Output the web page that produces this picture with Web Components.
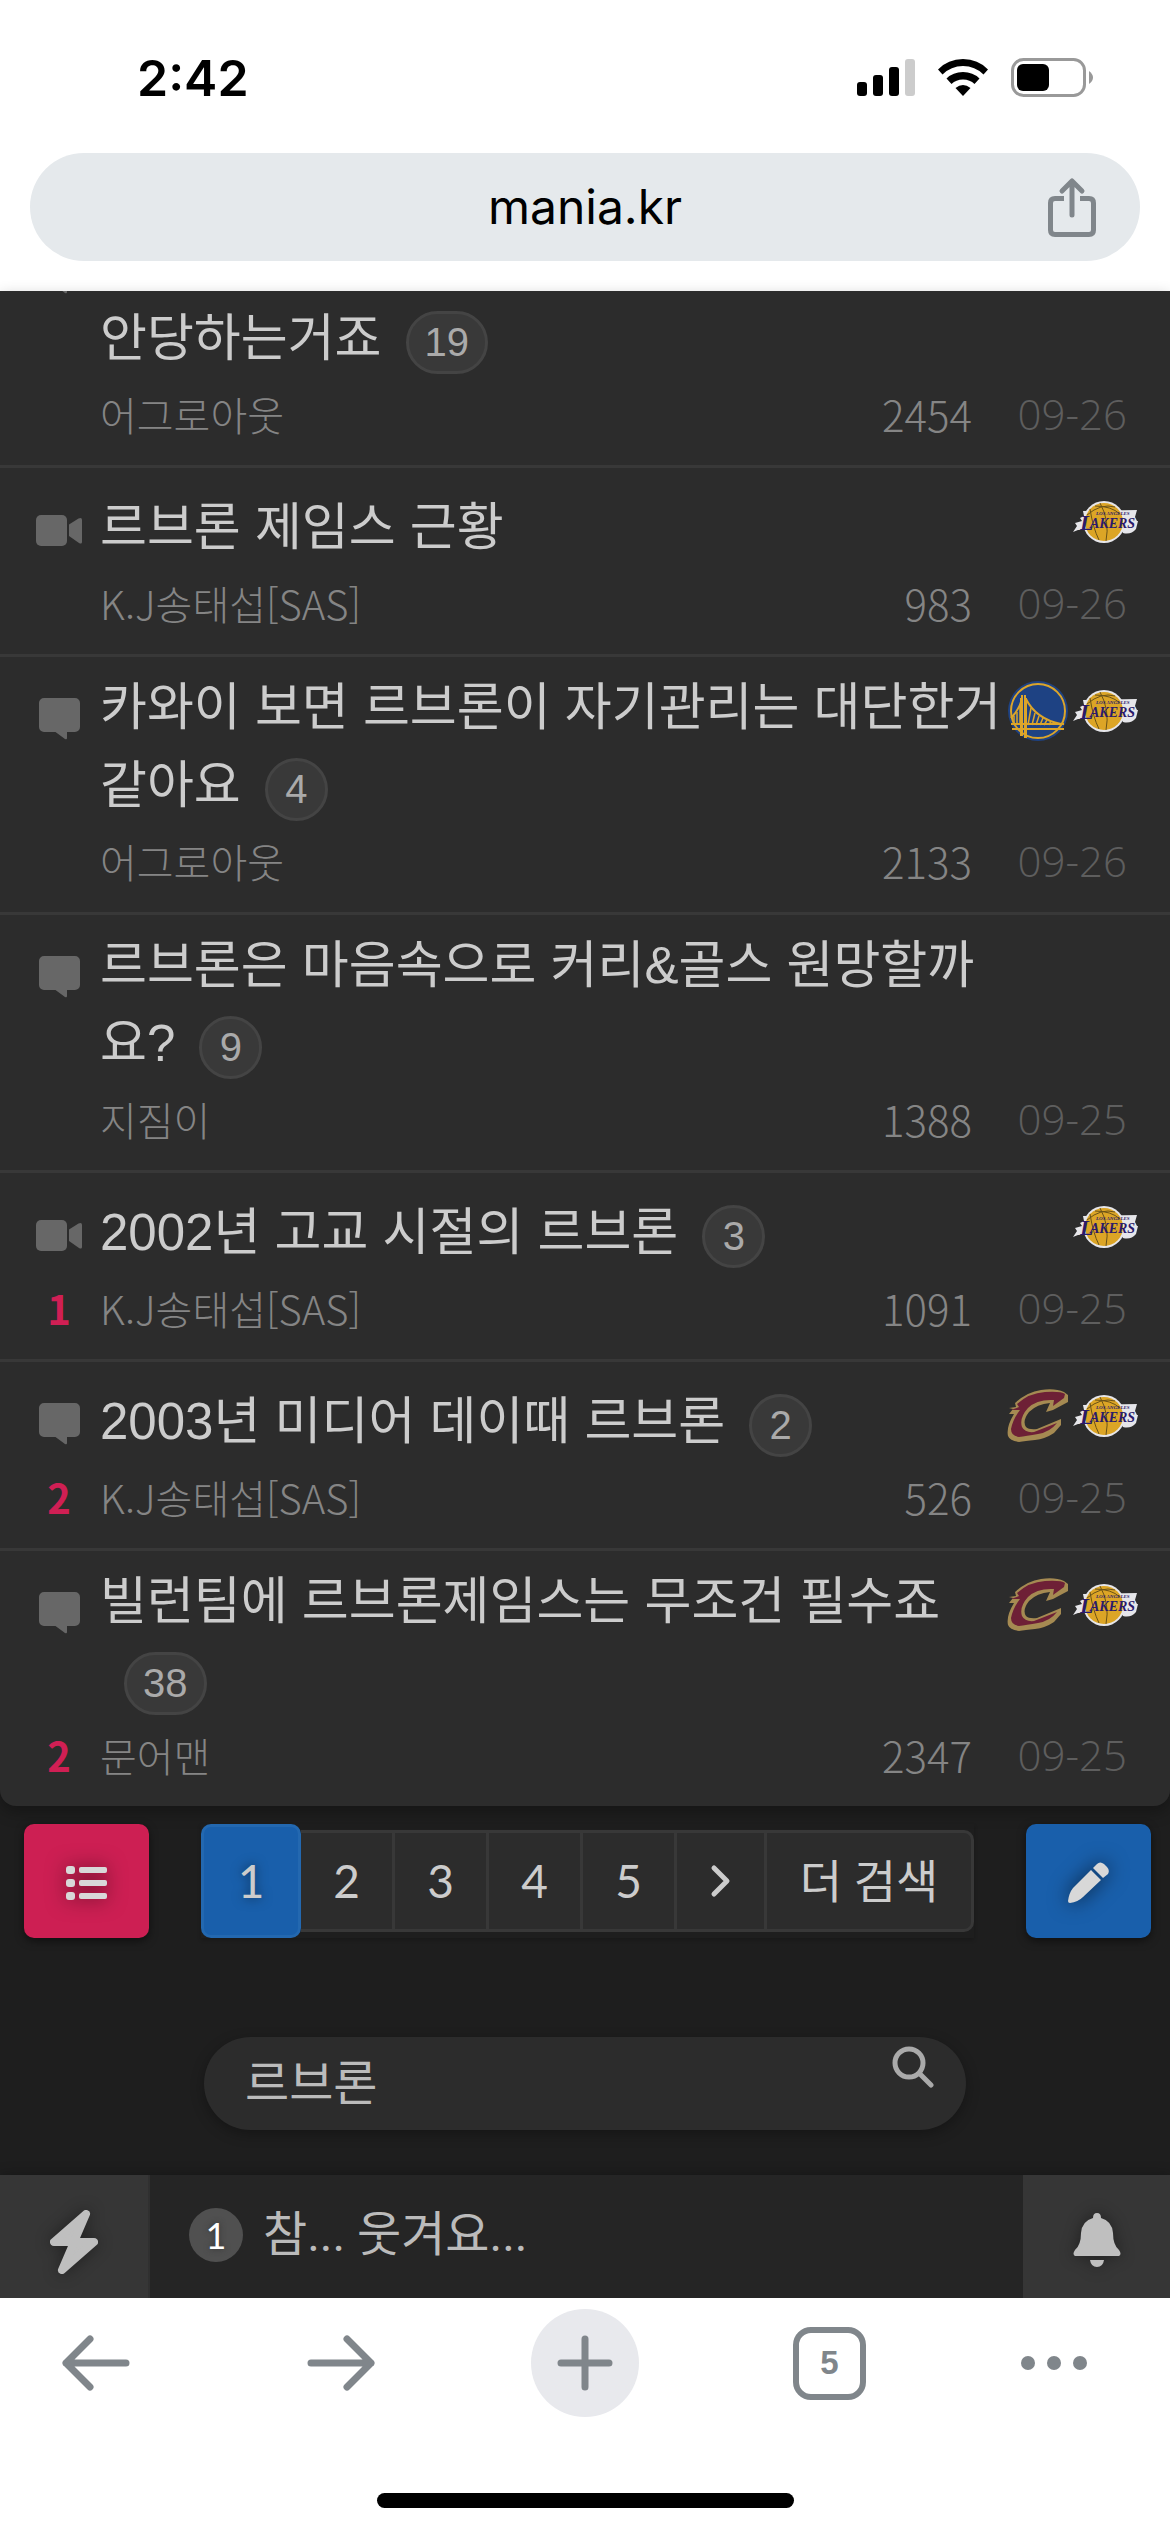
<!DOCTYPE html>
<html lang="ko">
<head>
<meta charset="utf-8">
<meta name="viewport" content="width=device-width, initial-scale=1">
<title>mania.kr</title>
<style>
  body {
    margin: 0;
    min-height: 100vh;
    display: flex;
    flex-direction: column;
    background: #fff;
    font-family: 'Noto Sans CJK KR', sans-serif;
  }

  main {
    flex: 1;
    display: flex;
    flex-direction: column;
    background: #1e1e1e;
    color: #ccc;
  }
</style>
</head>
<body>
  <status-bar time="2:42"></status-bar>
  <address-bar>mania.kr</address-bar>

  <main>
    <post-list>
      <post-item clipped type="talk" count="19" author="어그로아웃" views="2454" date="09-26">안당하는거죠</post-item>
      <post-item type="video" author="K.J송태섭[SAS]" views="983" date="09-26" teams="lakers">르브론 제임스 근황</post-item>
      <post-item type="talk" count="4" author="어그로아웃" views="2133" date="09-26" teams="warriors lakers">카와이 보면 르브론이 자기관리는 대단한거 같아요</post-item>
      <post-item type="talk" count="9" author="지짐이" views="1388" date="09-25">르브론은 마음속으로 커리&amp;골스 원망할까요?</post-item>
      <post-item type="video" count="3" votes="1" author="K.J송태섭[SAS]" views="1091" date="09-25" teams="lakers">2002년 고교 시절의 르브론</post-item>
      <post-item type="talk" count="2" votes="2" author="K.J송태섭[SAS]" views="526" date="09-25" teams="cavs lakers">2003년 미디어 데이때 르브론</post-item>
      <post-item type="talk" count="38" votes="2" author="문어맨" views="2347" date="09-25" teams="cavs lakers">빌런팀에 르브론제임스는 무조건 필수죠</post-item>
    </post-list>
    <page-nav></page-nav>
    <search-box value="르브론"></search-box>
    <ticker-bar rank="1">참... 웃겨요...</ticker-bar>
  </main>

  <browser-toolbar tabs="5"></browser-toolbar>

<script>
const TYPE_ICONS = {
  talk: `<svg width="48" height="48" viewBox="0 0 48 48" fill="#676767"><path d="M9 3h31a5 5 0 0 1 5 5v24a5 5 0 0 1-5 5h-8v6q0 2-2 1L20.500 37H9a5 5 0 0 1-5-5V8a5 5 0 0 1 5-5z"/></svg>`,
  video: `<svg width="48" height="48" viewBox="0 0 48 48" fill="#676767"><rect x="1" y="9" width="31" height="31" rx="5"/><path d="M34 18.500 43.500 12.500Q47 11 47 14V36Q47 38.500 44 37L34 30Z"/></svg>`
};

const TEAM_LOGOS = {
  lakers: `
    <svg width="66" height="62" viewBox="0 -10 66 62" role="img" aria-label="Lakers">
      <path d="M10 10 64 9 62 16 64 20 65 20 63 28Q58 34 50 32L48 29 5 29 0 31 4 25 2 22 9 20 7 17 11 15Z" fill="#e6e6ea"/>
      <circle cx="31" cy="21" r="21" fill="#e6e6ea"/>
      <circle cx="31" cy="21" r="19" fill="#dca526"/>
      <path d="M27 2Q37 20 33 40M17 8Q20 27 26 39M14 14Q28 2 42 6M22 5Q38 5 47 13" fill="none" stroke="#6a5218" stroke-width="1"/>
      <g fill="#2a1a6b" font-family="Liberation Serif" font-weight="bold" font-style="italic">
        <text x="23" y="14" font-size="5">LOS ANGELES</text>
        <text x="7" y="29" font-size="22">L</text>
        <text x="17" y="27" font-size="14">AKERS</text>
      </g>
    </svg>`,
  warriors: `
    <svg width="62" height="62" viewBox="0 0 62 62" role="img" aria-label="Warriors">
      <circle cx="31" cy="31" r="30" fill="#1e4283"/>
      <circle cx="31" cy="31" r="27" fill="none" stroke="#dca52a" stroke-width="2"/>
      <path d="M14.500 56V18M18.500 58V18" fill="none" stroke="#dca52a" stroke-width="3"/>
      <path d="M15 18V15M18 18V15M4 38Q12 30 15 19M19 19Q29 39 54 44M4 44H57M5 49H57" fill="none" stroke="#dca52a" stroke-width="2"/>
      <path d="M7 36V45M10 32V45M13 26V45M24 28 21 45M28 33 25 45M32 36 29 45M36 38 33 45M40 40 37 45M44 41 42 45" fill="none" stroke="#dca52a" stroke-width="1.500"/>
    </svg>`,
  cavs: `
    <svg width="62" height="62" viewBox="0 -4 62 62" role="img" aria-label="Cavaliers">
      <path d="M2 19 9 18 8 14Q20 3 34 1T57 3L61 6V13L46 21 39 23 43 14Q30 15 22 23 15 32 19 38 22 41 30 40L54 30V36L47 44Q38 50 28 51T12 53Q3 52 1 47 -1 38 7 25L2 25 6 20Z" fill="#a58a52"/>
      <path d="M4 21 12 18 10 15Q22 4 38 3T58 5L57 9 46 17 47 11Q30 10 21 19 12 29 15 38 18 44 27 43L50 34Q43 43 31 45T12 48Q4 47 4 40 6 30 13 21Z" fill="#6e2036"/>
    </svg>`
};

class StatusBar extends HTMLElement {
  constructor() {
    super();
    const shadow = this.attachShadow({ mode: 'open' });

    shadow.innerHTML = `
      <style>
        :host {
          display: flex;
          justify-content: space-between;
          align-items: center;
          padding: 54px 76px 51px 137px;
          color: #000;
          font: 600 50px/48px Inter, sans-serif;
        }

        .icons {
          display: flex;
          align-items: center;
          gap: 22px;
        }
      </style>
      <span>${this.getAttribute('time')}</span>
      <div class="icons">
        <svg width="59" height="38" viewBox="0 0 59 38">
          <rect x="0" y="23" width="10" height="14" rx="3"/>
          <rect x="16" y="16" width="10" height="21" rx="3"/>
          <rect x="32" y="8" width="10" height="29" rx="3"/>
          <rect x="48" y="0" width="10" height="37" rx="3" fill="#ccc"/>
        </svg>
        <svg width="51" height="38" viewBox="0 0 51 38">
          <path d="M0 10.500Q10 0 25 0T50 10.500L45.500 15.500Q37 7 25 7T4.500 15.500Z"/>
          <path d="M8.500 19.500Q15 13 25 13T41.500 19.500L36.500 25Q32 20.500 25 20.500T13.500 25Z"/>
          <path d="M17.500 29Q25 23 32.500 29L25 37Z"/>
        </svg>
        <svg width="83" height="40" viewBox="0 0 83 40">
          <rect x="1.500" y="1.500" width="72" height="36" rx="11" fill="none" stroke="#999" stroke-width="3"/>
          <rect x="6" y="6" width="32" height="27" rx="6"/>
          <path d="M78 13Q82 16 82 19.500T78 26Z" fill="#999"/>
        </svg>
      </div>
    `;
  }
}

class AddressBar extends HTMLElement {
  constructor() {
    super();
    const shadow = this.attachShadow({ mode: 'open' });

    shadow.innerHTML = `
      <style>
        :host {
          display: block;
          padding: 0 30px 30px;
        }

        .field {
          display: grid;
          grid-template-columns: 1fr auto 1fr;
          align-items: center;
          height: 108px;
          padding: 0 42px;
          border-radius: 54px;
          background: #e5e9ec;
          color: #000;
          font: 48px/60px Inter, sans-serif;
        }

        .url {
          grid-column: 2;
        }

        button {
          justify-self: end;
          display: flex;
          padding: 0;
          border: 0;
          background: none;
        }
      </style>
      <div class="field">
        <span class="url"><slot></slot></span>
        <button aria-label="Share">
          <svg width="52" height="60" viewBox="0 0 52 60" fill="none" stroke="#80868b" stroke-width="5" stroke-linecap="round" stroke-linejoin="round">
            <path d="M18 21.500H9Q4.500 21.500 4.500 26V53Q4.500 57.500 9 57.500H43Q47.500 57.500 47.500 53V26Q47.500 21.500 43 21.500H34" stroke-linecap="butt"/>
            <path d="M26 38V5M16 14 26 4 36 14"/>
          </svg>
        </button>
      </div>
    `;
  }
}

class PostList extends HTMLElement {
  constructor() {
    super();
    const shadow = this.attachShadow({ mode: 'open' });

    shadow.innerHTML = `
      <style>
        :host {
          display: block;
          overflow: hidden;
          background: #2c2c2c;
          border-radius: 0 0 16px 16px;
          box-shadow: 0 6px 16px rgba(0, 0, 0, 0.3);
        }

        ::slotted(:not(:last-child)) {
          border-bottom: 3px solid #383838;
        }
      </style>
      <slot></slot>
    `;
  }
}

class PostItem extends HTMLElement {
  constructor() {
    super();
    const shadow = this.attachShadow({ mode: 'open' });
    const attr = (name) => this.getAttribute(name) || '';
    const teams = attr('teams').split(' ').filter(Boolean);

    shadow.innerHTML = `
      <style>
        :host {
          display: grid;
          grid-template-columns: 82px 1fr 132px;
          padding: 0 31px 21px 18px;
          overflow: hidden;
        }

        .icon {
          display: flex;
          justify-content: center;
          height: 48px;
          padding-top: 38px;
        }

        .title-cell {
          display: flex;
          align-items: flex-end;
          min-height: 99px;
        }

        .title {
          padding-top: 12px;
          color: #ccc;
          font: 51px/78px 'Liberation Sans', 'Noto Sans CJK KR', sans-serif;
          text-decoration: none;
        }

        .count {
          display: inline-block;
          box-sizing: border-box;
          min-width: 63px;
          margin-left: 24px;
          padding: 0 16px;
          border: 3px solid #444;
          border-radius: 32px;
          background: #393939;
          color: #aaa;
          font-size: 40px;
          line-height: 57px;
          text-align: center;
          vertical-align: middle;
        }

        .teams {
          display: flex;
          justify-content: flex-end;
          gap: 4px;
          padding-top: 23px;
        }

        .votes {
          margin-top: 6px;
          color: #d01f54;
          font-size: 40px;
          font-weight: 700;
          line-height: 60px;
          text-align: center;
        }

        .meta {
          grid-column: 2 / 4;
          display: flex;
          margin: 6px 12px 0 0;
          color: #858585;
          font-size: 40px;
          font-weight: 300;
          line-height: 60px;
        }

        .author {
          flex: 1;
        }

        .views,
        .date {
          font-size: 42px;
        }

        .date {
          min-width: 155px;
          color: #5e5e5e;
          font-family: 'Open Sans', sans-serif;
          text-align: right;
        }

        /* first row is scrolled under the address bar */
        :host([clipped]) .icon {
          height: 5px;
          margin-top: -42px;
          padding: 0;
        }

        :host([clipped]) .title-cell {
          min-height: 87px;
        }

        :host([clipped]) .title {
          padding-top: 0;
        }
      </style>
      <div class="icon">${TYPE_ICONS[attr('type')]}</div>
      <div class="title-cell">
        <a class="title" href="#"><slot></slot>${attr('count') ? `<span class="count">${attr('count')}</span>` : ''}</a>
      </div>
      <div class="teams">${teams.map((team) => TEAM_LOGOS[team]).join('')}</div>
      <div class="votes">${attr('votes')}</div>
      <div class="meta">
        <span class="author">${attr('author')}</span>
        <span class="views">${attr('views')}</span>
        <span class="date">${attr('date')}</span>
      </div>
    `;
  }
}

class PageNav extends HTMLElement {
  constructor() {
    super();
    const shadow = this.attachShadow({ mode: 'open' });

    shadow.innerHTML = `
      <style>
        :host {
          display: flex;
          justify-content: space-between;
          align-items: center;
          padding: 18px 19px 0 24px;
        }

        button {
          display: flex;
          align-items: center;
          justify-content: center;
          width: 125px;
          height: 114px;
          padding: 4px 0 0;
          border: 0;
          border-radius: 10px;
          background: #195fab;
          box-shadow: 0 3px 8px rgba(0, 0, 0, 0.5);
        }

        button svg {
          filter: drop-shadow(0 0 10px rgba(0, 0, 0, 0.6));
        }

        .list {
          background: #cd1f53;
        }

        nav {
          display: flex;
          align-items: center;
          box-shadow: 0 2px 4px rgba(0, 0, 0, 0.2);
        }

        a {
          display: flex;
          align-items: center;
          justify-content: center;
          box-sizing: border-box;
          width: 94px;
          height: 102px;
          border: 3px solid #383838;
          border-left-width: 0;
          background: #2c2c2c;
          color: #ccc;
          font: 46px/60px Lato, 'Noto Sans CJK KR', sans-serif;
          text-decoration: none;
        }

        a.active {
          width: 100px;
          height: 114px;
          border: 3px solid #2368b0;
          border-radius: 10px;
          background: #195fab;
          text-shadow: 0 0 12px rgba(0, 0, 0, 0.5);
        }

        a.next {
          width: 90px;
        }

        a.more {
          width: 207px;
          border-radius: 0 10px 10px 0;
        }
      </style>
      <button class="list" aria-label="목록">
        <svg width="42" height="34" viewBox="0 0 42 34" fill="#d8d8d8">
          <rect x="0" y="0" width="9" height="8" rx="3"/><rect x="13" y="1" width="28" height="6" rx="2"/>
          <rect x="0" y="13" width="9" height="8" rx="3"/><rect x="13" y="14" width="28" height="6" rx="2"/>
          <rect x="0" y="26" width="9" height="8" rx="3"/><rect x="13" y="27" width="28" height="6" rx="2"/>
        </svg>
      </button>
      <nav>
        <a class="active" href="#">1</a>
        <a href="#">2</a>
        <a href="#">3</a>
        <a href="#">4</a>
        <a href="#">5</a>
        <a class="next" href="#" aria-label="다음">
          <svg width="22" height="34" viewBox="0 0 22 34" fill="none" stroke="#ccc" stroke-width="5" stroke-linecap="round" stroke-linejoin="round"><path d="M4 4 17 17 4 30"/></svg>
        </a>
        <a class="more" href="#">더 검색</a>
      </nav>
      <button aria-label="글쓰기">
        <svg width="42" height="42" viewBox="0 0 42 42" fill="#d8d8d8">
          <path d="M0 39Q1 31 5 26L23 8 33 18 15 35Q10 40 2 41 0 41 0 39Z"/>
          <path d="M25 6 29 2Q32-1 36 2L39 5Q42 8 40 12L35 16Z"/>
        </svg>
      </button>
    `;
  }
}

class SearchBox extends HTMLElement {
  constructor() {
    super();
    const shadow = this.attachShadow({ mode: 'open' });

    shadow.innerHTML = `
      <style>
        :host {
          display: block;
          padding: 99px 204px 45px;
        }

        form {
          display: flex;
          align-items: flex-start;
          height: 93px;
          padding: 0 32px 0 41px;
          border-radius: 47px;
          background: #2c2c2c;
          box-shadow: 0 4px 14px rgba(0, 0, 0, 0.3);
        }

        input {
          flex: 1;
          min-width: 0;
          height: 84px;
          padding: 0;
          border: 0;
          outline: 0;
          background: none;
          color: #bbb;
          font: 48px/60px 'Noto Sans CJK KR', sans-serif;
        }

        button {
          display: flex;
          padding: 9px 0;
          border: 0;
          background: none;
        }
      </style>
      <form>
        <input type="text" aria-label="검색어" value="${this.getAttribute('value')}">
        <button type="button" aria-label="검색">
          <svg width="42" height="42" viewBox="0 0 42 42" fill="none" stroke="#aaa" stroke-width="5" stroke-linecap="round"><circle cx="17" cy="17" r="14"/><path d="M28 28 39 39"/></svg>
        </button>
      </form>
    `;
  }
}

class TickerBar extends HTMLElement {
  constructor() {
    super();
    const shadow = this.attachShadow({ mode: 'open' });

    shadow.innerHTML = `
      <style>
        :host {
          display: flex;
          height: 123px;
          margin-top: auto;
          background: #252525;
          box-shadow: 0 0 12px rgba(0, 0, 0, 0.3);
        }

        button {
          display: flex;
          align-items: center;
          justify-content: center;
          box-sizing: border-box;
          width: 150px;
          padding: 10px 0 0;
          border: 0;
          border-right: 2px solid #303030;
          background: #363636;
        }

        button svg {
          filter: drop-shadow(0 0 8px rgba(0, 0, 0, 0.4));
        }

        .alarm {
          width: 147px;
          border: 0;
          padding: 6px 0 0;
        }

        .text {
          flex: 1;
          display: flex;
          align-items: center;
          gap: 20px;
          padding: 0 0 3px 39px;
          color: #bbb;
          font: 48px/72px Roboto, 'Noto Sans CJK KR', sans-serif;
        }

        .rank {
          width: 54px;
          border-radius: 50%;
          background: #505050;
          color: #fff;
          font: 36px/54px Lato, sans-serif;
          text-align: center;
          text-shadow: 0 0 6px #333;
        }
      </style>
      <button aria-label="실시간">
        <svg width="48" height="64" viewBox="0 0 48 64" fill="#bfbfbf" stroke="#bfbfbf" stroke-width="8" stroke-linejoin="round"><path d="M36 4 4 32H24L12 60 44 32H24Z"/></svg>
      </button>
      <div class="text">
        <span class="rank">${this.getAttribute('rank')}</span>
        <span><slot></slot></span>
      </div>
      <button class="alarm" aria-label="알림">
        <svg width="48" height="54" viewBox="0 0 48 54" fill="#bfbfbf"><path d="M24 0Q28 0 28 5 39 8 40 20 40 32 46 37 49 41 46 43H2Q-1 41 2 37 8 32 8 20 9 8 20 5 20 0 24 0ZM17 47H31Q30 54 24 54T17 47Z"/></svg>
      </button>
    `;
  }
}

class BrowserToolbar extends HTMLElement {
  constructor() {
    super();
    const shadow = this.attachShadow({ mode: 'open' });

    shadow.innerHTML = `
      <style>
        :host {
          display: flex;
          flex-direction: column;
          justify-content: space-between;
          align-items: center;
          box-sizing: border-box;
          height: 234px;
          padding: 11px 0 24px;
          background: #fff;
        }

        .buttons {
          align-self: stretch;
          display: flex;
          justify-content: space-between;
          padding: 0 82px 0 42px;
        }

        button {
          display: flex;
          align-items: center;
          justify-content: center;
          width: 108px;
          height: 108px;
          padding: 0;
          border: 0;
          border-radius: 50%;
          background: none;
        }

        .add {
          background: #e8e9ed;
        }

        .more {
          width: 68px;
        }

        .tabs {
          box-sizing: border-box;
          width: 73px;
          height: 73px;
          border: 6px solid #80868b;
          border-radius: 18px;
          color: #80868b;
          font: bold 33px/60px 'Liberation Sans', sans-serif;
        }

        .home {
          width: 417px;
          height: 15px;
          border-radius: 8px;
          background: #000;
        }
      </style>
      <div class="buttons">
        <button aria-label="Back"><svg width="68" height="56" viewBox="0 0 68 56" fill="none" stroke="#80868b" stroke-width="7" stroke-linecap="round" stroke-linejoin="round"><path d="M64 28H4M28 4 4 28 28 52"/></svg></button>
        <button aria-label="Forward"><svg width="68" height="56" viewBox="0 0 68 56" fill="none" stroke="#80868b" stroke-width="7" stroke-linecap="round" stroke-linejoin="round"><path d="M4 28H64M40 4 64 28 40 52"/></svg></button>
        <button class="add" aria-label="New tab"><svg width="56" height="56" viewBox="0 0 56 56" fill="none" stroke="#80868b" stroke-width="7" stroke-linecap="round"><path d="M28 4V52M4 28H52"/></svg></button>
        <button aria-label="Tabs"><span class="tabs">${this.getAttribute('tabs')}</span></button>
        <button class="more" aria-label="More"><svg width="68" height="16" viewBox="0 0 68 16" fill="#80868b"><circle cx="8" cy="8" r="7"/><circle cx="34" cy="8" r="7"/><circle cx="60" cy="8" r="7"/></svg></button>
      </div>
      <div class="home"></div>
    `;
  }
}

customElements.define('status-bar', StatusBar);
customElements.define('address-bar', AddressBar);
customElements.define('post-list', PostList);
customElements.define('post-item', PostItem);
customElements.define('page-nav', PageNav);
customElements.define('search-box', SearchBox);
customElements.define('ticker-bar', TickerBar);
customElements.define('browser-toolbar', BrowserToolbar);
</script>
</body>
</html>
